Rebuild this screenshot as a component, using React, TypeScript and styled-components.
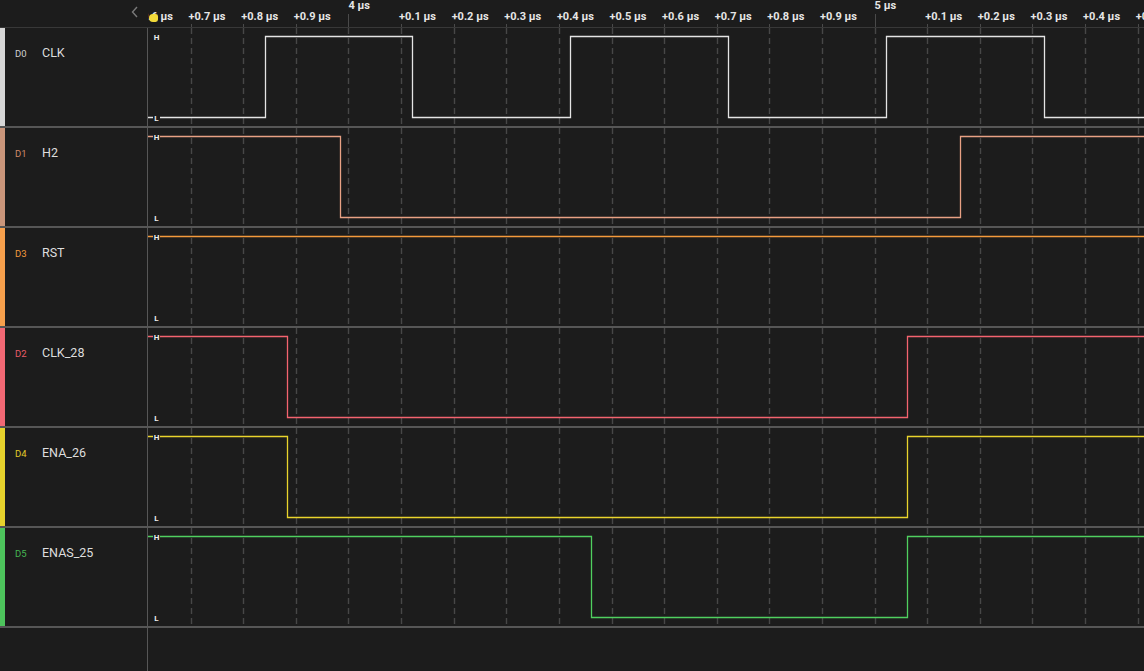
import styled, { createGlobalStyle } from "styled-components";

const TICK0 = 348.4;
const STEP = 52.62;
const TRACE_X = 148;
const TRACE_W = 996;
const HI = 8.5;
const LO = 89.5;

const GlobalStyle = createGlobalStyle`
    body {
        margin: 0;
        background: #1c1c1c;
        font-family: Roboto, "Liberation Sans", sans-serif;
    }
`

const Screen = styled.div`
    width: 1144px;
    height: 671px;
    display: flex;
    flex-direction: column;
    background: #1c1c1c;
    overflow: hidden;
`

const Header = styled.div`
    height: 28px;
    display: flex;
    box-sizing: border-box;
    border-bottom: 1px solid #383838;
`

const HeaderSide = styled.div`
    width: 148px;
    display: flex;
    justify-content: flex-end;
    padding: 6px 9px 0 0;
    box-sizing: border-box;
`

const Ruler = styled.div`
    flex: 1;
    position: relative;
    overflow: hidden;
`

const TickLabel = styled.span<{ $major?: boolean }>`
    position: absolute;
    top: ${p => p.$major ? '0px' : '11px'};
    margin-left: -2px;
    font-size: 11px;
    font-weight: 700;
    color: #e6e6e6;
    white-space: nowrap;
    line-height: 12px;
`

const TickMark = styled.span<{ $major?: boolean }>`
    position: absolute;
    bottom: 0;
    width: 1px;
    height: ${p => p.$major ? '13px' : '3px'};
    background: #4a4a4a;
`

const Marker = styled.span`
    position: absolute;
    left: 1px;
    top: 14px;
    width: 9px;
    height: 8px;
    border-radius: 5px 3px 3px 5px;
    background: #f2da3a;
`

const Row = styled.div`
    height: 100px;
    display: flex;
    box-sizing: border-box;
    border-bottom: 2px solid #565656;
`

const Side = styled.div`
    width: 148px;
    display: flex;
    align-items: flex-start;
    box-sizing: border-box;
    border-right: 1px solid #565656;
`

const ColorBar = styled.div<{ $color: string }>`
    width: 5px;
    align-self: stretch;
    background: ${p => p.$color};
`

const LabelBox = styled.div`
    display: flex;
    align-items: baseline;
    padding: 18px 0 0 10px;
    line-height: 14px;
`

const Tag = styled.span<{ $color: string }>`
    width: 27px;
    font-size: 9.5px;
    color: ${p => p.$color};
`

const Name = styled.span`
    font-size: 12.5px;
    color: #dedede;
`

const Trace = styled.svg`
    flex: 1;
    display: block;
`

const Footer = styled.div`
    flex: 1;
    display: flex;
`

const FooterSide = styled.div`
    width: 148px;
    box-sizing: border-box;
    border-right: 1px solid #565656;
`

type Channel = {
    tag: string
    name: string
    bar: string
    tagColor: string
    wave: string
    start: 'H' | 'L'
    edges: number[]
}

const channels: Channel[] = [
    { tag: 'D0', name: 'CLK', bar: '#d6d6d6', tagColor: '#d0d0d0', wave: '#e4e4e4', start: 'L', edges: [265, 412, 570, 728, 886, 1044] },
    { tag: 'D1', name: 'H2', bar: '#c9957a', tagColor: '#d08a6a', wave: '#e8a184', start: 'H', edges: [340, 960] },
    { tag: 'D3', name: 'RST', bar: '#f7a04c', tagColor: '#f39a3e', wave: '#f59a3c', start: 'H', edges: [] },
    { tag: 'D2', name: 'CLK_28', bar: '#f26874', tagColor: '#e85c68', wave: '#f4636f', start: 'H', edges: [287, 907] },
    { tag: 'D4', name: 'ENA_26', bar: '#e6d22c', tagColor: '#e2cc28', wave: '#e9d42c', start: 'H', edges: [287, 907] },
    { tag: 'D5', name: 'ENAS_25', bar: '#4dc45c', tagColor: '#45b652', wave: '#4fd05f', start: 'H', edges: [591, 907] },
]

const ticks = Array.from({ length: 20 }, (_, i) => i - 4)

const tickText = (k: number) => {
    if (k === 0) return '4 μs'
    if (k === 10) return '5 μs'
    const d = ((k % 10) + 10) % 10
    return `+0.${d} μs`
}

const wavePath = (ch: Channel) => {
    let level = ch.start
    let d = `M0 ${level === 'H' ? HI : LO}`
    ch.edges.forEach(x => {
        const lx = x - TRACE_X + 0.5
        d += ` H${lx}`
        level = level === 'H' ? 'L' : 'H'
        d += ` V${level === 'H' ? HI : LO}`
    })
    d += ` H${TRACE_W}`
    return d
}

const LevelMark = ({ y, text }: { y: number, text: string }) => (
    <g>
        <rect x={5} y={y - 4} width={7} height={8} fill="#1c1c1c" />
        <text x={8.5} y={y + 3} fontSize={8} fontWeight={700} fill="#eeeeee" textAnchor="middle" fontFamily="Roboto, sans-serif">{text}</text>
    </g>
)

export default function App() {
    return (
        <>
            <GlobalStyle />
            <Screen>
                <Header>
                    <HeaderSide>
                        <svg width="8" height="12" viewBox="0 0 8 12">
                            <polyline points="6,1 1.5,6 6,11" fill="none" stroke="#7a7a7a" strokeWidth="1.4" />
                        </svg>
                    </HeaderSide>
                    <Ruler>
                        {ticks.map(k => {
                            const x = TICK0 + k * STEP - TRACE_X
                            const major = k === 0 || k === 10
                            return (
                                <span key={k}>
                                    <TickMark $major={major} style={{ left: x }} />
                                    <TickLabel $major={major} style={{ left: x + (major ? 2 : 0) }}>{tickText(k)}</TickLabel>
                                </span>
                            )
                        })}
                        <Marker />
                    </Ruler>
                </Header>
                {channels.map(ch => (
                    <Row key={ch.tag}>
                        <Side>
                            <ColorBar $color={ch.bar} />
                            <LabelBox>
                                <Tag $color={ch.tagColor}>{ch.tag}</Tag>
                                <Name>{ch.name}</Name>
                            </LabelBox>
                        </Side>
                        <Trace viewBox={`0 0 ${TRACE_W} 98`} width={TRACE_W} height={98}>
                            {ticks.filter(k => k > -4).map(k => {
                                const x = Math.round(TICK0 + k * STEP - TRACE_X) + 0.5
                                return <line key={k} x1={x} y1={0} x2={x} y2={98} stroke="#474747" strokeWidth={1.4} strokeDasharray="6 4" />
                            })}
                            <path d={wavePath(ch)} fill="none" stroke={ch.wave} strokeWidth={1.3} />
                            <LevelMark y={HI} text="H" />
                            <LevelMark y={LO} text="L" />
                        </Trace>
                    </Row>
                ))}
                <Footer>
                    <FooterSide />
                </Footer>
            </Screen>
        </>
    )
}
